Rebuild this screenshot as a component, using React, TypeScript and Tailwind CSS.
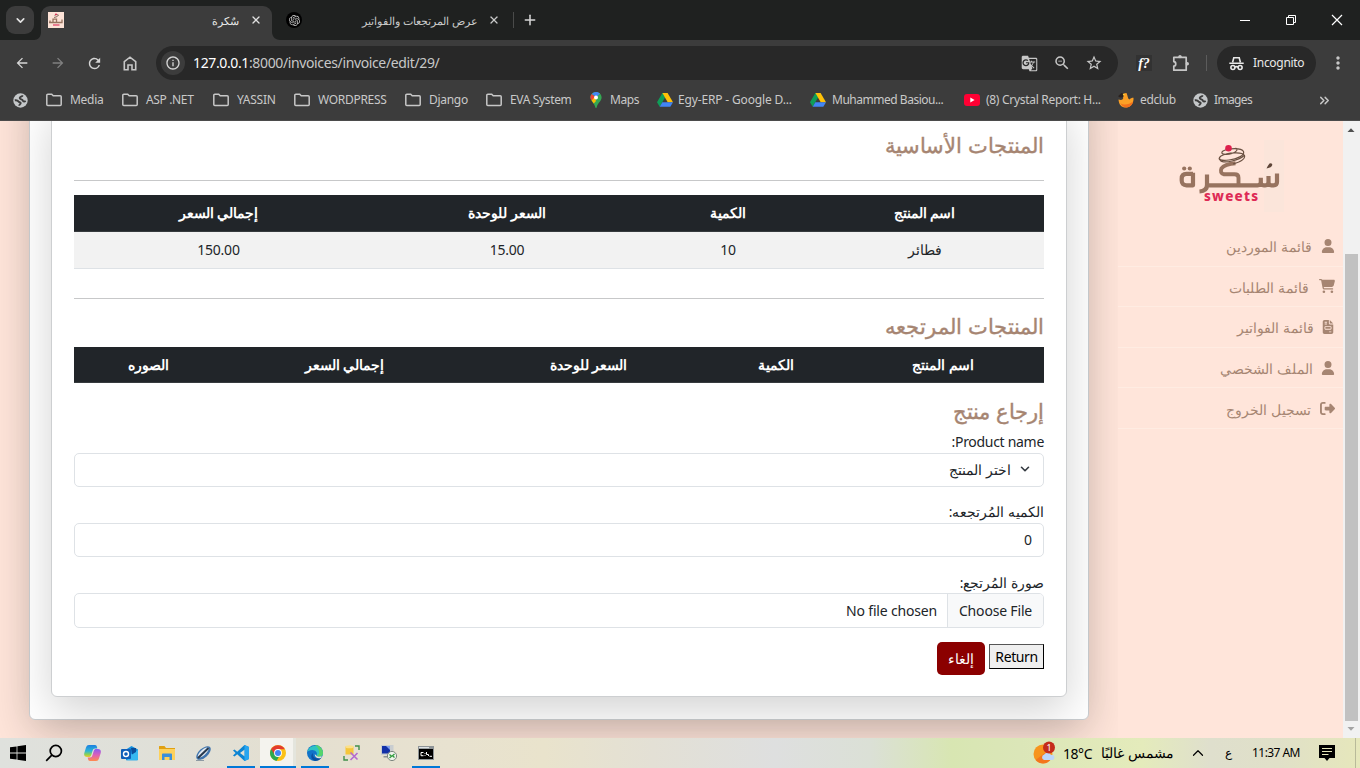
import React from "react";
import { FaUser, FaCartShopping, FaFileInvoice, FaRightFromBracket } from "react-icons/fa6";
import {
  MdArrowBack,
  MdArrowForward,
  MdGTranslate,
  MdInfoOutline,
  MdMoreVert,
  MdRefresh,
  MdStarBorder,
  MdZoomOut,
} from "react-icons/md";
import { SiOpenai } from "react-icons/si";
import { ChevronDown, ChevronUp, ChevronsRight, Plus, X } from "lucide-react";

/* ---------- browser icons ---------- */

function FolderIcon() {
  return (
    <svg width="16" height="14" viewBox="0 0 16 14" fill="none" stroke="#c7c7c7" strokeWidth="1.5">
      <path d="M.8 2.2c0-.6.4-1 1-1h3.900l1.500 1.600h7c.6 0 1 .4 1 1v7.600c0 .6-.4 1-1 1H1.800c-.6 0-1-.4-1-1z" />
    </svg>
  );
}

function GlobeIcon() {
  return (
    <svg width="15" height="15" viewBox="0 0 15 15">
      <circle cx="7.500" cy="7.500" r="7.200" fill="#c4c7c9" />
      <path
        d="M9.800 2.300C9 3.900 6.800 3.400 6.700 5c0 1.700 2.800 1.200 3.200 2.700.3 1 1.700 1 2.800.3M1.800 7.300c1.800-.3 3 .2 3.600 1.100.7 1 2.300.4 2.300 1.600 0 1.100-1.500 1.300-1.500 2.800"
        fill="none"
        stroke="#3c3c3c"
        strokeWidth="1.900"
      />
    </svg>
  );
}

function DriveIcon() {
  return (
    <svg width="16" height="14" viewBox="0 0 16 14">
      <path d="M5.400 0h5.200L5.300 9.200 2.700 13.800 0 9.200z" fill="#0f9d58" />
      <path d="M5.400 0h5.200L16 9.200h-5.300z" fill="#ffc107" />
      <path d="M5.300 9.200H16l-2.700 4.600H2.700z" fill="#4285f4" />
    </svg>
  );
}

function MapsIcon() {
  return (
    <svg width="12" height="16" viewBox="0 0 12 16">
      <path d="M6 0C2.700 0 .4 2.500.4 5.500c0 3.600 3.700 4.900 5 9.900.1.4.3.6.6.6s.5-.2.6-.6c1.300-5 5-6.300 5-9.900C11.600 2.500 9.300 0 6 0z" fill="#34a853" />
      <path d="M1.800 1.900 6 5.600 1.700 8.500A6 6 0 0 1 .4 5.500c0-1.400.5-2.700 1.400-3.600z" fill="#ea4335" />
      <path d="M1.700 8.500 4.600 5 6 9l-2.200 2.600C3 10.500 2.200 9.500 1.700 8.500z" fill="#fbbc04" />
      <path d="M1.800 1.900A5.600 5.600 0 0 1 6 0c1.600 0 3 .6 4 1.600L6.500 5z" fill="#4285f4" />
      <circle cx="6" cy="5.500" r="2" fill="#fff" />
    </svg>
  );
}

function YoutubeIcon() {
  return (
    <svg width="16" height="12" viewBox="0 0 16 12">
      <rect width="16" height="12" rx="3" fill="#ff0033" />
      <path d="M6.300 3.400 10.600 6 6.300 8.600z" fill="#fff" />
    </svg>
  );
}

function EdclubIcon() {
  return (
    <svg width="16" height="16" viewBox="0 0 16 16">
      <path d="M.5 7.500C.8 13 4 15.800 8.200 15.600c4.500-.2 7.700-4.500 7.300-9.800-1.800 0-3 .6-4.200 1.600C9.500 6.500 10 4 8.500 1L5 1.500c-1 1.500-.8 3 .2 4.300C5.500 7.500 3.500 8.500.5 7.500z" fill="#fba026" />
      <path d="M2.500 11c2.500 2.500 8.500 2 12.500-1.500-.5 3.500-3 5.700-6.500 5.900-3 0-5-1.600-6-4.400z" fill="#f3701c" />
      <path d="M0 4.300 3.500 1l2.700.8-1 3.400L2 5.500z" fill="#2b2320" />
      <circle cx="5.800" cy="2.600" r=".9" fill="#ffd43b" />
    </svg>
  );
}

function HomeIcon() {
  return (
    <svg width="14" height="15" viewBox="0 0 14 15" fill="none" stroke="#c7c7c7" strokeWidth="1.600">
      <path d="M1.300 5.600 7 1.200l5.700 4.400v8.200H9V9H5v4.800H1.300z" />
    </svg>
  );
}

function ExtensionIcon() {
  return (
    <svg width="18" height="18" viewBox="0 0 18 18" fill="none" stroke="#c7c7c7" strokeWidth="1.700">
      <path d="M1.800 3.400h12.400v12.800H1.800v-4.100c2.600-.2 2.600-4.200 0-4.400z" strokeLinejoin="round" />
      <circle cx="8" cy="2.600" r="1.700" fill="#c7c7c7" stroke="none" />
      <circle cx="15.300" cy="9.800" r="1.700" fill="#c7c7c7" stroke="none" />
    </svg>
  );
}

function IncognitoIcon() {
  return (
    <svg width="15" height="15" viewBox="0 0 15 15" fill="none" stroke="#e8e8e8" strokeWidth="1.600">
      <path d="M3.600 6.200 4.800 1.700h5.400l1.200 4.500M.3 7.200h14.400" />
      <circle cx="3.900" cy="11.500" r="2" />
      <circle cx="11.100" cy="11.500" r="2" />
      <path d="M5.800 11.200c1-.7 2.400-.7 3.400 0" />
    </svg>
  );
}

/* ---------- shop logo ---------- */

function SweetsLogo() {
  return (
    <svg width="108" height="72" viewBox="0 0 108 72">
      <rect x="86" y="0" width="20" height="72" fill="#fae5da" opacity=".8" />
      <g fill="none" stroke="#97735f" strokeWidth="4.200" strokeLinejoin="round">
        <path d="M99 33.500v8.200q0 3.600-3.400 3.600h-2.100q-3 0-3-3v-6.300M90.500 42q0 3.300-3.200 3.300h-1.500q-3 0-3-3v-4.600M82.800 42q0 3.300-3.300 3.300H27.500" />
        <path d="M60.500 45.300v-7.500q0-3.500-4-3.500H46q-4.500-1-2.500-6 3-4 14-5" strokeWidth="3.900" />
        <path d="M29 34.500v10.500q0 6-7.500 6.500" />
        <path d="M15 32.700v12.600H8.500q-4.800 0-4.800-4.800v-1.800q0-4.800 4.800-4.800H15" />
      </g>
      <g fill="#97735f">
        <circle cx="6.200" cy="28.500" r="2.100" />
        <circle cx="11.800" cy="28.500" r="2.100" />
        <path d="M88.500 28.500q1-2.500 3-5 3-.8 2.800 1.600-.8 2.400-4 2.900z" fill="#5e4538" />
      </g>
      <g fill="none" stroke="#6b5142" strokeWidth="1.200">
        <path d="M55 24c7-2 12.500-5 11.500-8.500-2-4-17-3-23.500.500-5 4 1 5 8 4 8-1 16-4.500 14.500-8.500-2-4-15-3.500-20.500-.5-4 3 3 4.500 9 2.500 4.500-1.500 6.500-4 3.500-5.500" />
        <path d="M42 18.500c-1 4 6 4 12 2.500s10-3.500 12-5.500" />
      </g>
      <circle cx="50.500" cy="8.300" r="3.300" fill="#de1f4c" />
      <text
        x="26"
        y="60.500"
        direction="ltr"
        textLength="54"
        lengthAdjust="spacing"
        fill="#de2a55"
        fontSize="13.500"
        fontWeight="800"
        fontFamily="'Noto Sans', sans-serif"
      >
        sweets
      </text>
    </svg>
  );
}

/* ---------- chrome ---------- */

function TabStrip() {
  return (
    <div className="flex h-10 items-end bg-[#1f2120]">
      <div className="mb-[6px] ml-[6px] flex h-[28px] w-[28px] items-center justify-center rounded-[9px] bg-[#3c3c3c]">
        <ChevronDown size={13} strokeWidth={3} color="#e3e3e3" />
      </div>
      <svg width="7" height="8" viewBox="0 0 7 8">
        <path d="M7 0v8H0c4 0 7-3 7-8z" fill="#3c3c3c" />
      </svg>
      <div className="flex h-[34px] w-[231px] items-center rounded-t-[9px] bg-[#3c3c3c] pb-[6px] pl-[7px] pr-[10px]">
        <svg width="16" height="16" viewBox="0 0 16 16">
          <rect width="16" height="16" fill="#fde3d7" />
          <path d="M1 10.500h13V7.500M5 10V7.200h3.500v3M2 8.500v2" stroke="#97735f" strokeWidth="1.300" fill="none" />
          <path d="M6 5.500q4-.5 4.500-2.500-2-1-4 .3" stroke="#8a6c60" fill="none" />
          <circle cx="8" cy="2.300" r=".9" fill="#de1f4c" />
          <path d="M5 13h6.500" stroke="#e0456a" strokeWidth="1.300" />
        </svg>
        <span dir="rtl" className="ml-auto mr-[11px] whitespace-nowrap pt-[2px] text-[11px] text-[#e8e8e8]">
          سٌكرة
        </span>
        <X size={12} strokeWidth={2.600} color="#e0e0e0" />
      </div>
      <svg width="8" height="8" viewBox="0 0 8 8">
        <path d="M0 0v8h8C4 8 0 5 0 0z" fill="#3c3c3c" />
      </svg>
      <div className="flex h-[40px] w-[220px] items-center pl-[6px]">
        <div className="flex h-4 w-4 items-center justify-center rounded-full bg-black">
          <SiOpenai size={11} color="#c9c9c9" />
        </div>
        <span dir="rtl" className="ml-auto mr-[10px] whitespace-nowrap pt-px text-[11.450px] text-[#c9c9c9]">
          عرض المرتجعات والفواتير
        </span>
        <X size={12} strokeWidth={2.600} color="#c9c9c9" />
      </div>
      <div className="mb-3 ml-[13px] h-4 w-px bg-[#4a4b4a]" />
      <div className="flex h-10 items-center pl-[8px]">
        <Plus size={16} strokeWidth={2.300} color="#d6d6d6" />
      </div>
      <div className="ml-auto mr-[17px] flex h-10 items-center gap-[34px]">
        <svg width="12" height="12" viewBox="0 0 12 12">
          <path d="M1 6.500h10" stroke="#fff" />
        </svg>
        <svg width="12" height="12" viewBox="0 0 12 12" fill="none" stroke="#fff">
          <path d="M1.500 3.500h7v7h-7zM3.500 3.500v-2h7v7h-2" />
        </svg>
        <svg width="12" height="12" viewBox="0 0 12 12">
          <path d="m1 1 10 10M11 1 1 11" stroke="#fff" strokeWidth="1.200" />
        </svg>
      </div>
    </div>
  );
}

function Toolbar() {
  return (
    <div className="flex h-[46px] items-center bg-[#3c3c3c] pl-[14px]">
      <div className="flex w-[142px] items-center gap-5">
        <MdArrowBack size={16} color="#d6d6d6" />
        <MdArrowForward size={16} color="#808080" />
        <MdRefresh size={17} color="#d6d6d6" className="-mr-[2px]" />
        <div className="pl-[2px]">
          <HomeIcon />
        </div>
      </div>
      <div className="flex h-[34px] w-[962px] items-center rounded-full bg-[#282828] pl-[5px] pr-[15px]">
        <div className="flex h-6 w-6 items-center justify-center rounded-full bg-[#3c3c3c]">
          <MdInfoOutline size={16} color="#d6d6d6" />
        </div>
        <span className="ml-[8px] whitespace-nowrap pb-px text-[14px] tracking-[-0.370px] text-[#c7c7c7]">
          <span className="text-white">127.0.0.1</span>:8000/invoices/invoice/edit/29/
        </span>
        <div className="ml-auto flex items-center gap-[15px]">
          <MdGTranslate size={17} color="#c7c7c7" />
          <MdZoomOut size={18} color="#c7c7c7" />
          <MdStarBorder size={18} color="#c7c7c7" className="-ml-px" />
        </div>
      </div>
      <div className="ml-[18px] flex h-4 w-4 items-center justify-center bg-[#323232] font-['Liberation_Serif'] text-[14px] font-bold italic text-white">
        f?
      </div>
      <div className="ml-[20px]">
        <ExtensionIcon />
      </div>
      <div className="ml-[16px] h-4 w-px bg-[#5c5c5c]" />
      <div className="ml-[10px] flex h-[34px] w-[99px] items-center gap-[9px] rounded-full bg-[#282828] pl-[12px]">
        <IncognitoIcon />
        <span className="text-[12px] tracking-[-0.300px] text-[#e8e8e8]">Incognito</span>
      </div>
      <MdMoreVert size={20} color="#c7c7c7" className="ml-[12px]" />
    </div>
  );
}

type Bookmark = { icon: React.ReactNode; label: string; width: string; textAt: string };

const bookmarks: Bookmark[] = [
  { icon: <FolderIcon />, label: "Media", width: "w-[76px] tracking-[-0.300px]", textAt: "w-6" },
  { icon: <FolderIcon />, label: "ASP .NET", width: "w-[91px] tracking-[-0.350px]", textAt: "w-6" },
  { icon: <FolderIcon />, label: "YASSIN", width: "w-[81px] tracking-[-0.250px]", textAt: "w-6" },
  { icon: <FolderIcon />, label: "WORDPRESS", width: "w-[111px] tracking-[-0.300px]", textAt: "w-6" },
  { icon: <FolderIcon />, label: "Django", width: "w-[81px] tracking-[-0.300px]", textAt: "w-6" },
  { icon: <FolderIcon />, label: "EVA System", width: "w-[104px] tracking-[-0.350px]", textAt: "w-6" },
  { icon: <MapsIcon />, label: "Maps", width: "w-[67px] tracking-[-0.450px]", textAt: "w-5" },
  { icon: <DriveIcon />, label: "Egy-ERP - Google D...", width: "w-[153px] tracking-[-0.150px]", textAt: "w-[21px]" },
  { icon: <DriveIcon />, label: "Muhammed Basiou...", width: "w-[154px] tracking-[-0.480px]", textAt: "w-[22px]" },
  { icon: <YoutubeIcon />, label: "(8) Crystal Report: H...", width: "w-[154px] tracking-[-0.300px]", textAt: "w-[22px]" },
  { icon: <EdclubIcon />, label: "edclub", width: "w-[75px] tracking-[-0.350px]", textAt: "w-[22px]" },
  { icon: <GlobeIcon />, label: "Images", width: "w-[124px] tracking-[-0.650px]", textAt: "w-[21px]" },
];

function BookmarksBar() {
  return (
    <div className="flex h-[35px] items-center border-b border-[#4b4b4b] bg-[#3c3c3c] pb-[6px] pl-[13px]">
      <div className="w-[33px] shrink-0">
        <GlobeIcon />
      </div>
      {bookmarks.map((b) => (
        <div key={b.label} className={`flex shrink-0 items-center ${b.width}`}>
          <div className={`shrink-0 ${b.textAt}`}>{b.icon}</div>
          <span className="whitespace-nowrap text-[12px] text-[#c9c9c9]">{b.label}</span>
        </div>
      ))}
      <ChevronsRight size={15} strokeWidth={2.300} color="#c7c7c7" />
    </div>
  );
}

/* ---------- page ---------- */

const cell = "border-b p-0 text-center align-middle";

function BaseProductsTable() {
  return (
    <table className="mt-[14px] w-[970px] table-fixed border-collapse">
      <thead>
        <tr className="h-[36px] bg-[#212529] text-white">
          <th className={`${cell} w-[239px] border-[#373b3e]`}>اسم المنتج</th>
          <th className={`${cell} w-[154px] border-[#373b3e]`}>الكمية</th>
          <th className={`${cell} w-[288px] border-[#373b3e]`}>السعر للوحدة</th>
          <th className={`${cell} w-[289px] border-[#373b3e]`}>إجمالي السعر</th>
        </tr>
      </thead>
      <tbody>
        <tr className="h-[37px] bg-[#f2f2f2] tracking-[-0.250px]">
          <td className={`${cell} border-[#dee2e6]`}>فطائر</td>
          <td className={`${cell} border-[#dee2e6]`}>10</td>
          <td className={`${cell} border-[#dee2e6]`}>15.00</td>
          <td className={`${cell} border-[#dee2e6]`}>150.00</td>
        </tr>
      </tbody>
    </table>
  );
}

function ReturnedProductsTable() {
  const head = "h-[36px] border-b border-[#373b3e] p-0 text-center align-middle";
  return (
    <table className="w-[970px] table-fixed border-collapse">
      <thead>
        <tr className="bg-[#212529] text-white">
          <th className={`${head} w-[202px]`}>اسم المنتج</th>
          <th className={`${head} w-[132px]`}>الكمية</th>
          <th className={`${head} w-[243px]`}>السعر للوحدة</th>
          <th className={`${head} w-[245px]`}>إجمالي السعر</th>
          <th className={`${head} w-[148px]`}>الصوره</th>
        </tr>
      </thead>
    </table>
  );
}

const title = "text-[21.200px] font-medium text-[#a68572] [-webkit-text-stroke:0.400px_#a68572]";
const label = "text-[13.700px]";

function Invoice() {
  return (
    <main className="flex h-[820px] w-[1060px] shrink-0 items-end rounded-[6px] border border-[#c9cccf] bg-white p-[21px] pb-[22px] shadow-[0_14px_43px_rgba(0,0,0,0.175)]">
      <div
        dir="rtl"
        className="h-[594px] w-[1016px] shrink-0 rounded-[6px] border border-[#cdcfd1] bg-white px-[22px] pt-[17px] text-[#212529] shadow-[0_14px_43px_rgba(0,0,0,0.175)]"
      >
        <h3 className={`${title} mb-[11px] flex h-[48px] items-center`}>المنتجات الأساسية</h3>
        <hr className="border-[#c7c8c9]" />
        <BaseProductsTable />
        <hr className="mt-[29px] border-[#c7c8c9]" />
        <h3 className={`${title} flex h-[48px] items-center pt-[7px]`}>المنتجات المرتجعه</h3>
        <ReturnedProductsTable />
        <h3 className={`${title} mt-[13px] flex h-[30px] items-center`}>إرجاع منتج</h3>
        <label className="mt-[4px] flex h-[23px] items-center tracking-[-0.300px]">Product name:</label>
        <div className="flex h-[34px] items-center rounded-[5px] border border-[#dee2e6] px-[11px]">
          <ChevronDown size={14} strokeWidth={2.800} color="#343a40" className="mb-[2px]" />
          <span className={`mr-[7px] ${label}`}>اختر المنتج</span>
        </div>
        <label className={`mt-[15px] flex h-[21px] items-center ${label}`}>الكميه المُرتجعه:</label>
        <div className="flex h-[34px] items-center rounded-[5px] border border-[#dee2e6] px-[11px] pb-px">0</div>
        <label className={`mt-[16px] flex h-[20px] items-center ${label}`}>صورة المُرتجع:</label>
        <div className="flex h-[35px] items-center overflow-hidden rounded-[5px] border border-[#dee2e6] tracking-[-0.180px]">
          <span className="flex h-full w-[96px] items-center justify-center border-l border-[#dee2e6] bg-[#f8f9fa]">
            Choose File
          </span>
          <span className="mr-[10px]">No file chosen</span>
        </div>
        <div className="mt-[14px] flex items-start gap-1">
          <button className="mt-[2px] flex h-[25px] w-[55px] items-center justify-center border border-t-[#555] border-l-[#555] border-b-black border-r-black bg-[#efefef] tracking-[-0.400px] text-black">
            Return
          </button>
          <button className="flex h-[33px] w-[48px] items-center justify-center rounded-[5px] bg-[#8b0000] text-white">
            إلغاء
          </button>
        </div>
      </div>
    </main>
  );
}

const menu = [
  { icon: <FaUser size={14} />, label: "قائمة الموردين", gap: "mr-[9px]" },
  { icon: <FaCartShopping size={16} />, label: "قائمة الطلبات", gap: "mr-[10px]" },
  { icon: <FaFileInvoice size={14} />, label: "قائمة الفواتير", gap: "mr-[7px]" },
  { icon: <FaUser size={14} />, label: "الملف الشخصي", gap: "mr-[8px]" },
  { icon: <FaRightFromBracket size={15} />, label: "تسجيل الخروج", gap: "mr-[9px]" },
];

function Sidebar() {
  return (
    <aside dir="rtl" className="z-10 h-full w-[225px] shrink-0 bg-[#ffe5da] text-[#a68572]">
      <div className="flex h-[105px] items-start pr-[57px] pt-[19px]">
        <SweetsLogo />
      </div>
      {menu.map((m) => (
        <div key={m.label} className="flex h-[40.600px] items-center border-b border-[#ffece2] pr-[8px]">
          {m.icon}
          <span className={`${m.gap} whitespace-nowrap pt-[3px] text-[13.500px]`}>{m.label}</span>
        </div>
      ))}
    </aside>
  );
}

function Scrollbar() {
  return (
    <div className="z-10 flex h-full w-[17px] shrink-0 flex-col items-center bg-[#f1f1f1]">
      <svg width="17" height="17" viewBox="0 0 17 17">
        <path d="M4.500 11 8 7.300l3.500 3.700z" fill="#505050" />
      </svg>
      <div className="mt-[116px] h-[467px] w-[13px] bg-[#c1c1c1]" />
      <svg width="17" height="17" viewBox="0 0 17 17">
        <path d="M4.500 6 8 9.700 11.500 6z" fill="#a3a3a3" />
      </svg>
    </div>
  );
}

/* ---------- taskbar ---------- */

function TaskButton({ children, active, running }: { children: React.ReactNode; active?: boolean; running?: boolean }) {
  return (
    <div className="flex h-full w-[37px] flex-col items-center">
      <div className={`flex h-[28px] items-center justify-center pt-[2px] ${active ? "w-[36px] border-r-[3px] border-[#e4e5dd] bg-[#f4f3ee] pl-[3px]" : "w-full"}`}>
        {children}
      </div>
      <div className={`h-[2px] ${active ? "w-[36px] bg-[#0078d7]" : running ? "w-[28px] bg-[#0078d7]" : "w-0"}`} />
    </div>
  );
}

function Taskbar() {
  return (
    <footer className="flex h-[30px] items-center bg-linear-[90deg,#dfe1dd_0%,#e0e0d8_12%,#e4dfd0_22%,#e8e2d0_33%,#e9e3cc_40%,#e3e0d5_48%,#dedfdf_57%,#dbe0d6_64%,#d8e6b2_70%,#dbe6b8_75%,#e4ebbb_84%,#dfdfcd_89%,#e0e0c8_94%,#e6e7bb_100%]">
      <div className="flex w-[36px] justify-center">
        <svg width="16" height="16" viewBox="0 0 16 16" fill="#000">
          <path d="M0 2.300 6.600 1.400v6.200H0zM7.400 1.300 16 0v7.600H7.400zM0 8.400h6.600v6.200L0 13.700zM7.400 8.400H16V16l-8.600-1.300z" />
        </svg>
      </div>
      <div className="flex w-[38px] justify-center pr-[2px]">
        <svg width="18" height="18" viewBox="0 0 18 18" fill="none" stroke="#000" strokeWidth="1.700">
          <circle cx="10.800" cy="7" r="5.600" />
          <path d="m6.800 11.200-5.600 5.600" />
        </svg>
      </div>
      <TaskButton>
        <svg width="17" height="16" viewBox="0 0 17 16">
          <defs>
            <linearGradient id="copilotLeft" x1="0" y1="0" x2="0" y2="1">
              <stop offset="0" stopColor="#1c7fe0" />
              <stop offset=".5" stopColor="#2cb5d8" />
              <stop offset=".8" stopColor="#8fd14f" />
              <stop offset="1" stopColor="#f2c633" />
            </linearGradient>
            <linearGradient id="copilotRight" x1="0" y1="0" x2="0" y2="1">
              <stop offset="0" stopColor="#8a5cf0" />
              <stop offset=".5" stopColor="#dd5fb8" />
              <stop offset="1" stopColor="#ff8a4c" />
            </linearGradient>
          </defs>
          <path d="M5 0h6c1.200 0 1.700.8 2 2l.3 1.500h-2C9.500 3.500 9 4.300 8.500 6L7.300 10c-.5 1.500-1.200 2-2.500 2H3C.8 12-.3 10.500.3 8L2 2.500C2.600.8 3.500 0 5 0z" fill="url(#copilotLeft)" />
          <path d="M12 16H6c-1.200 0-1.700-.8-2-2l-.3-1.500h2c1.800 0 2.300-.8 2.800-2.500L9.700 6c.5-1.500 1.200-2 2.500-2H14c2.200 0 3.300 1.500 2.700 4L15 13.500c-.6 1.700-1.500 2.500-3 2.500z" fill="url(#copilotRight)" />
        </svg>
      </TaskButton>
      <TaskButton>
        <svg width="17" height="15" viewBox="0 0 17 15">
          <path d="M5 3.500 10.500 0 17 3.500V13c0 .8-.4 1.300-1.200 1.300H5z" fill="#1490df" />
          <path d="M10.500 8 17 4v9c0 .8-.4 1.300-1.200 1.300H6z" fill="#35b8f1" />
          <path d="M10 2h5v4l-4 2.500z" fill="#0a4f9c" />
          <rect y="3" width="10" height="10" rx="1" fill="#0f5fb8" />
          <circle cx="5" cy="8" r="2.500" fill="none" stroke="#fff" strokeWidth="1.400" />
        </svg>
      </TaskButton>
      <TaskButton>
        <svg width="16" height="14" viewBox="0 0 16 14">
          <path d="M0 .5C0 .2.200 0 .5 0H5.500l1.500 2H16v3H0z" fill="#e0a012" />
          <path d="M0 3h16v11H0z" fill="#fdd15c" />
          <path d="M3 14V8.500C3 8 3.400 7.500 4 7.500h8c.6 0 1 .5 1 1V14h-2.500v-3h-5v3z" fill="#3a8fdc" />
        </svg>
      </TaskButton>
      <TaskButton>
        <svg width="17" height="16" viewBox="0 0 17 16">
          <ellipse cx="8.500" cy="8" rx="8.800" ry="4.600" transform="rotate(-42 8.500 8)" fill="#3f74ad" />
          <ellipse cx="8.200" cy="7.500" rx="7" ry="2.700" transform="rotate(-42 8.200 7.500)" fill="#dfe8f0" />
          <path d="M3 13 13.500 3" stroke="#26384d" strokeWidth="2" />
          <path d="M1 15.500h8" stroke="#8d99a3" />
        </svg>
      </TaskButton>
      <TaskButton running>
        <svg width="16" height="16" viewBox="0 0 16 16">
          <path d="M11.500 0 16 2v12l-4.500 2-7.300-6.700L1.500 11.500 0 10.500 2.600 8 0 5.500l1.500-1 2.700 2.200zM11.700 4.500 7 8l4.700 3.500z" fill="#0b84d3" />
          <path d="M11.500 0 16 2v12l-4.500 2z" fill="#27a5f0" />
        </svg>
      </TaskButton>
      <TaskButton active>
        <svg width="16" height="16" viewBox="0 0 16 16">
          <circle cx="8" cy="8" r="8" fill="#fbc116" />
          <path d="M8 8 1.100 4A8 8 0 0 0 6.500 15.900L10 10z" fill="#2da94f" />
          <path d="M8 4.200h6.900A8 8 0 0 0 1.100 4L4.600 9.800z" fill="#e33b2e" />
          <circle cx="8" cy="8" r="3.900" fill="#fff" />
          <circle cx="8" cy="8" r="3" fill="#4285f4" />
        </svg>
      </TaskButton>
      <TaskButton running>
        <svg width="16" height="16" viewBox="0 0 16 16">
          <circle cx="8" cy="8" r="8" fill="#1173c8" />
          <path d="M.2 7A8 8 0 0 1 16 8.300c0 2.500-2 3.400-3.800 3.400-2 0-3.200-.8-2.600-1.700C11 8 8.500 5 5.300 5 2.800 5 .8 6 .2 7z" fill="#2fc3c4" />
          <path d="M8 0a8 8 0 0 1 8 8.300c0 2.500-2 3.400-3.800 3.400-1.300 0-2.200-.3-2.500-.8C14 9 12 3 8 0z" fill="#55d46b" />
          <path d="M6 8c-1 4 2 6.500 8.500 4.700A8 8 0 0 1 8.500 16C4 15.500 3 10 6 8z" fill="#0c4f9e" />
          <path d="M9.700 10.900c.9 1 3 1 5 .3l-.6 1.800C10 14 7.500 12 7.800 9z" fill="#e5e1d3" />
        </svg>
      </TaskButton>
      <TaskButton>
        <svg width="17" height="16" viewBox="0 0 17 16">
          <path d="M2.500 1.500h8v8h-8z" fill="#f5c63a" />
          <ellipse cx="6.500" cy="1.800" rx="4" ry="1.500" fill="#fbe08a" />
          <path d="M12 1h4v4M1 11v4h4" fill="none" stroke="#3f8f4a" strokeWidth="1.400" />
          <path d="m7.500 7.500 7 7M14.500 8l-7 7" stroke="#b469cf" strokeWidth="1.600" />
        </svg>
      </TaskButton>
      <TaskButton>
        <svg width="16" height="16" viewBox="0 0 16 16">
          <path d="M0 0h12.500v10H0z" fill="#c9cdd0" />
          <path d="M1 1h8v7.500H1z" fill="#1230a8" />
          <path d="M5 1h4v4z" fill="#7fa0ee" />
          <path d="M2.500 11h6v1.500h-6z" fill="#8d9396" />
          <circle cx="11" cy="11" r="4.600" fill="#eef2ea" stroke="#7d8780" />
          <path d="m8.500 9.500 2 1.700-2 1.700M13.500 9l-2 1.700 2 1.700" stroke="#2f9a3c" strokeWidth="1.300" fill="none" />
        </svg>
      </TaskButton>
      <TaskButton running>
        <svg width="16" height="14" viewBox="0 0 16 14">
          <rect width="16" height="14" fill="#8e9497" />
          <path d="M1 1h10v1.200H1z" fill="#dfe3e5" />
          <rect x="1" y="3" width="14" height="10" fill="#000" />
          <path d="M5.500 6.500H3v3.200h2.500M7 7v.8M7 9v.8M8.500 6v2.500h2V10M11.500 10.300h2.500" stroke="#fff" fill="none" />
        </svg>
      </TaskButton>

      <div className="ml-auto flex h-full items-center text-black">
        <svg width="24" height="24" viewBox="0 0 24 24">
          <circle cx="10" cy="13" r="9.500" fill="#f7941d" />
          <path d="M2.500 19a9.500 9.500 0 0 0 15.500-1L14 10.500z" fill="#f26a1b" opacity=".7" />
          <path d="M11 19a2.800 2.800 0 0 1 .2-5.400 3.800 3.800 0 0 1 6.800.3 2.600 2.600 0 0 1 1.500 5.100z" fill="#bcd6fb" />
          <circle cx="16" cy="6.500" r="6" fill="#c42b1c" />
          <text x="16" y="9.700" textAnchor="middle" fontSize="9" fill="#fff" fontFamily="'Noto Sans', sans-serif">
            1
          </text>
        </svg>
        <span className="ml-[6px] w-[38px] whitespace-nowrap text-[14px] tracking-[-0.450px]">18°C</span>
        <span dir="rtl" className="w-[73px] whitespace-nowrap text-[13.900px]">
          مشمس غالبًا
        </span>
        <ChevronUp size={18} strokeWidth={1.600} className="ml-[15px]" />
        <span className="ml-[18px] w-[8px] text-[12px]">ع</span>
        <span className="ml-[19px] w-[50px] whitespace-nowrap text-[12px] tracking-[-0.550px]">11:37 AM</span>
        <svg width="16" height="16" viewBox="0 0 16 16" className="ml-[17px]">
          <path d="M0 0h16v13h-5.500L8 16l-2.500-3H0z" fill="#000" />
          <path d="M3 3.500h10M3 6.500h10M3 9.500h6.500" stroke="#e6e7bb" />
        </svg>
        <div className="ml-[20px] mr-[4px] h-full w-px bg-[#b9ba9a]" />
      </div>
    </footer>
  );
}

export default function App() {
  return (
    <div className="flex h-[768px] w-[1360px] flex-col overflow-hidden font-['Noto_Sans',sans-serif] text-[14px] leading-[1.500]">
      <TabStrip />
      <Toolbar />
      <BookmarksBar />
      <div className="flex h-[617px] overflow-hidden bg-[#ffe5da]">
        <div className="flex h-full w-[1118px] shrink-0 items-end pb-[18px] pl-[29px]">
          <Invoice />
        </div>
        <Sidebar />
        <Scrollbar />
      </div>
      <Taskbar />
    </div>
  );
}
